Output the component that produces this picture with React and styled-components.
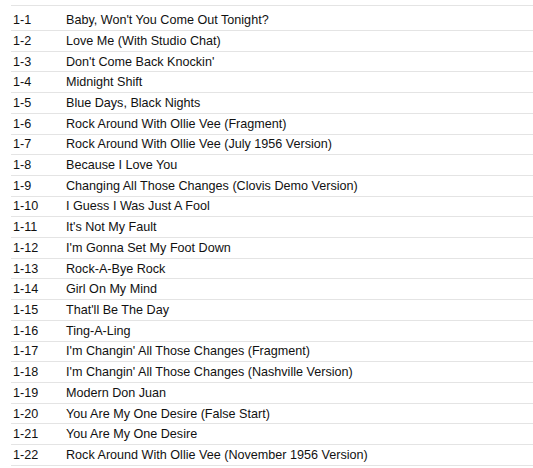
import React from "react";
import styled, { createGlobalStyle } from "styled-components";

const tracks = [
    "Baby, Won't You Come Out Tonight?",
    "Love Me (With Studio Chat)",
    "Don't Come Back Knockin'",
    "Midnight Shift",
    "Blue Days, Black Nights",
    "Rock Around With Ollie Vee (Fragment)",
    "Rock Around With Ollie Vee (July 1956 Version)",
    "Because I Love You",
    "Changing All Those Changes (Clovis Demo Version)",
    "I Guess I Was Just A Fool",
    "It's Not My Fault",
    "I'm Gonna Set My Foot Down",
    "Rock-A-Bye Rock",
    "Girl On My Mind",
    "That'll Be The Day",
    "Ting-A-Ling",
    "I'm Changin' All Those Changes (Fragment)",
    "I'm Changin' All Those Changes (Nashville Version)",
    "Modern Don Juan",
    "You Are My One Desire (False Start)",
    "You Are My One Desire",
    "Rock Around With Ollie Vee (November 1956 Version)",
];

const GlobalStyle = createGlobalStyle`
    html, body {
        margin: 0;
        padding: 0;
        background: #ffffff;
    }
    body {
        font-family: "Liberation Sans", Arial, sans-serif;
        color: #111111;
        overflow: hidden;
    }
`;

const Page = styled.div`
    width: 533px;
    height: 468px;
    padding: 5px 0 0 11px;
    box-sizing: border-box;
`;

const TrackList = styled.div`
    border-top: 1px solid #e4e4e4;
    padding-top: 4.3px;
`;

const Row = styled.div`
    display: flex;
    align-items: center;
    height: 20.714px;
    box-sizing: border-box;
    border-bottom: 1px solid #e4e4e4;
    font-size: 12.6px;
    white-space: nowrap;
`;

const Num = styled.div`
    width: 55px;
    padding-left: 2px;
    box-sizing: border-box;
    flex-shrink: 0;
`;

const Title = styled.div`
    flex: 1;
`;

const App = () => {
    return (
        <Page>
            <GlobalStyle />
            <TrackList>
                {tracks.map((title, i) => (
                    <Row key={i}>
                        <Num>1-{i + 1}</Num>
                        <Title>{title}</Title>
                    </Row>
                ))}
            </TrackList>
        </Page>
    );
};

export default App;
